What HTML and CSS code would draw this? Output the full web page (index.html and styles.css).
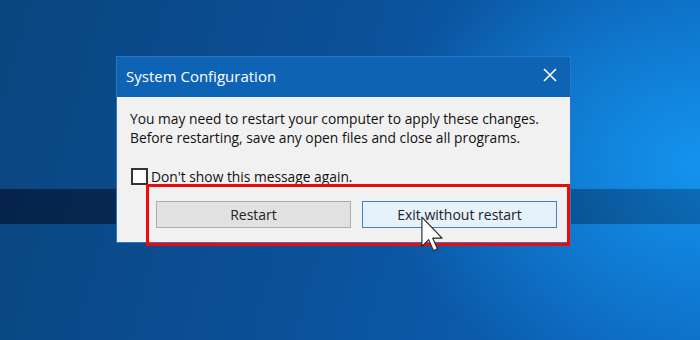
FILE: index.html
```html
<!DOCTYPE html>
<html lang="en">
<head>
    <meta charset="utf-8">
    <title>System Configuration</title>
    <link rel="stylesheet" href="styles.css">
</head>
<body>
<div class="desktop">
    <div class="dialog">
        <div class="titlebar">
            <span class="title">System Configuration</span>
            <svg class="close" width="14" height="14" viewBox="0 0 14 14">
                <path d="M1 1 L13 13 M13 1 L1 13" stroke="#fff" stroke-width="1.6" fill="none"/>
            </svg>
        </div>
        <div class="content">
            <p class="message">
                You may need to restart your computer to apply these changes.<br>
                Before restarting, save any open files and close all programs.
            </p>
            <label class="check">
                <span class="box"></span>
                <span>Don't show this message again.</span>
            </label>
            <div class="actions">
                <button class="btn">Restart</button>
                <button class="btn btn-hover">Exit without restart</button>
            </div>
        </div>
    </div>

    <!-- annotation + pointer drawn over the dialog -->
    <div class="highlight"></div>
    <svg class="cursor" width="22" height="37" viewBox="0 0 12 20">
        <path d="M0.5 0.5 L0.5 16.5 L4.2 12.8 L6.8 18.8 L9 17.8 L6.4 12 L11.5 12 Z"
              fill="#fff" stroke="#222" stroke-width="0.6" stroke-linejoin="round"/>
    </svg>
</div>
</body>
</html>
```

FILE: styles.css
```css
body {
    margin: 0;
    font-family: 'Open Sans', 'Noto Sans', sans-serif;
}

.desktop {
    position: relative;
    width: 700px;
    height: 340px;
    box-sizing: border-box;
    padding: 56px 0 0 116px;
    overflow: hidden;
    background:
        linear-gradient(90deg, rgba(2, 14, 36, 0.62) 0%, rgba(2, 20, 50, 0.5) 55%, rgba(0, 30, 70, 0.32) 100%) no-repeat 0 189px / 100% 35px,
        radial-gradient(ellipse 320px 240px at 100% 48%, rgba(20, 150, 240, 0.95), rgba(20, 150, 240, 0) 100%),
        linear-gradient(105deg, #0a457e 0%, #0b5098 45%, #0c66bf 100%);
}

.dialog {
    width: 455px;
    height: 187px;
    box-sizing: border-box;
    background: #f1f1f1;
    border: 1px solid #2a78c2;
    display: flex;
    flex-direction: column;
}

.titlebar {
    height: 40px;
    background: #0f63b5;
    display: flex;
    align-items: center;
    justify-content: space-between;
    padding: 0 13px 0 9px;
    color: #fff;
}

.title {
    font-size: 15px;
    margin-top: -2px;
}

.close {
    margin-top: -4px;
}

.content {
    flex: 1;
    padding: 12px 13px 14px 13px;
    display: flex;
    flex-direction: column;
    color: #111;
    font-size: 13.8px;
}

.message {
    margin: 0;
    line-height: 19px;
}

.check {
    display: flex;
    align-items: center;
    gap: 3px;
    margin-top: 20px;
    margin-left: 1px;
}

.box {
    width: 13px;
    height: 13px;
    border: 2px solid #333;
    background: #fff;
}

.actions {
    margin-top: auto;
    margin-left: 26px;
    display: flex;
    gap: 11px;
}

.btn {
    width: 195px;
    height: 27px;
    font-family: inherit;
    font-size: 14px;
    color: #222;
    background: #e1e1e1;
    border: 1px solid #adadad;
    padding: 0;
}

.btn-hover {
    background: #e5f1fb;
    border-color: #3d83c4;
}

.highlight {
    position: absolute;
    left: 146px;
    top: 184px;
    width: 418px;
    height: 56px;
    border: 3px solid #ee0a0a;
}

.cursor {
    position: absolute;
    left: 421px;
    top: 216px;
}
```
